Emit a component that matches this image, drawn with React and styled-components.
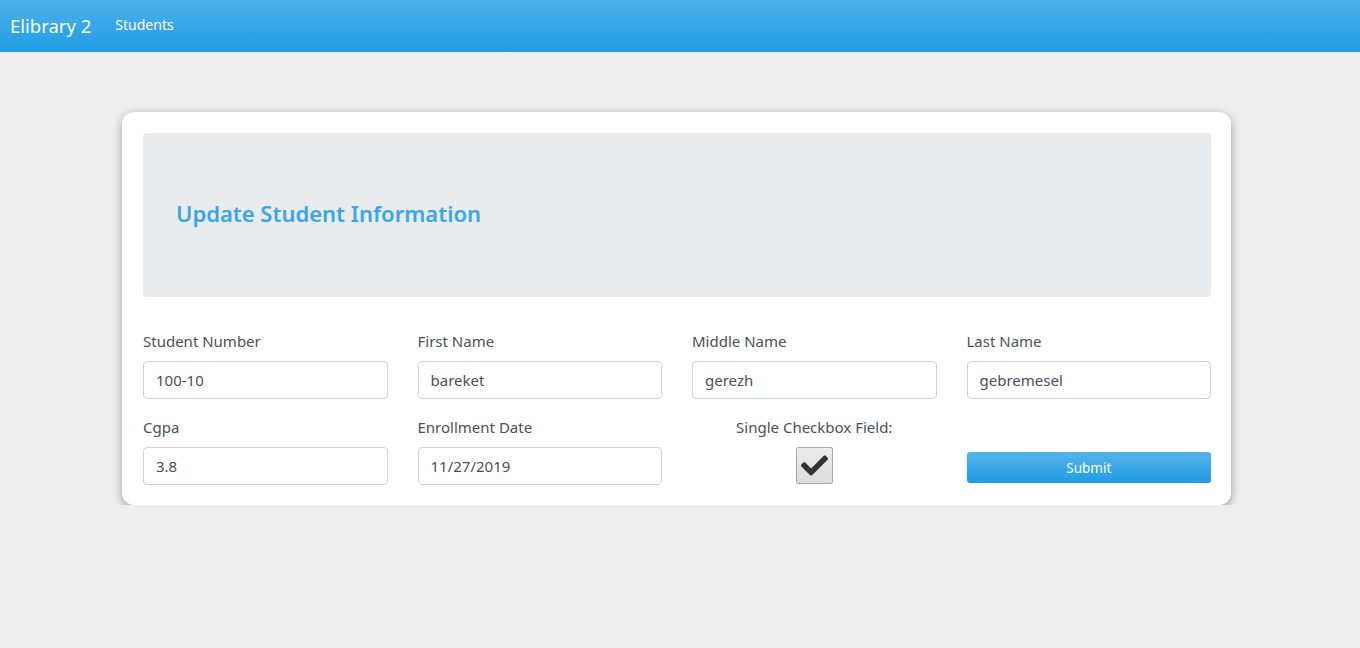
import React from 'react';
import styled, { createGlobalStyle } from 'styled-components';
import { FaCheck } from 'react-icons/fa';

const GlobalStyle = createGlobalStyle`
  body {
    margin: 0;
    background: #eeeeee;
    font-family: "Noto Sans", "Open Sans", sans-serif;
    color: #495057;
  }
  * { box-sizing: border-box; }
`;

const Navbar = styled.nav`
  height: 52px;
  background: linear-gradient(#4cb1ec, #219ce4);
  display: flex;
  align-items: center;
  padding: 0 10px;
  color: #fff;
`;

const Brand = styled.a`
  font-size: 18.5px;
  color: #fff;
  margin-right: 24px;
  margin-top: -2px;
`;

const NavLink = styled.a`
  font-size: 14px;
  color: #fff;
  margin-top: -3px;
`;

const Card = styled.div`
  width: 1109px;
  margin: 60px 0 0 122px;
  background: #fff;
  border-radius: 12px;
  padding: 21px 20px 20px 21px;
  box-shadow: 0 3px 10px rgba(0, 0, 0, 0.35);
`;

const Jumbotron = styled.div`
  height: 164px;
  background: #e9ecef;
  border-radius: 4px;
  display: flex;
  align-items: center;
  padding: 0 33px 5px;
`;

const Title = styled.h1`
  margin: 0;
  font-size: 22px;
  font-weight: 600;
  color: #3aa5e8;
`;

const Grid = styled.div`
  display: grid;
  grid-template-columns: repeat(4, minmax(0, 1fr));
  column-gap: 30px;
  row-gap: 18px;
  margin-top: 34px;
`;

const Field = styled.div`
  display: flex;
  flex-direction: column;
  min-width: 0;
  align-items: ${p => (p.center ? 'center' : 'stretch')};
`;

const Label = styled.label`
  font-size: 15px;
  line-height: 20px;
  margin-bottom: 10px;
  color: #495057;
`;

const Input = styled.input`
  width: 100%;
  min-width: 0;
  height: 38px;
  border: 1px solid #ced4da;
  border-radius: 4px;
  padding: 0 12px;
  font-family: inherit;
  font-size: 15px;
  color: #495057;
  background: #fff;
  outline: none;
`;

const CheckBox = styled.div`
  width: 37px;
  height: 37px;
  border: 1px solid #a8a8a8;
  border-radius: 2px;
  background: linear-gradient(#ececec, #dcdcdc);
  display: flex;
  align-items: center;
  justify-content: center;
  color: #333;
  font-size: 27px;
`;

const ButtonCell = styled.div`
  display: flex;
  align-items: flex-end;
  padding-bottom: 2px;
`;

const SubmitButton = styled.button`
  width: 100%;
  height: 31px;
  border: none;
  border-radius: 3px;
  background: linear-gradient(#54b4eb, #1f9be4);
  color: #fff;
  font-family: inherit;
  font-size: 13.5px;
  cursor: pointer;
`;

const fields = [
  { label: 'Student Number', value: '100-10' },
  { label: 'First Name', value: 'bareket' },
  { label: 'Middle Name', value: 'gerezh' },
  { label: 'Last Name', value: 'gebremesel' },
  { label: 'Cgpa', value: '3.8' },
  { label: 'Enrollment Date', value: '11/27/2019' },
];

export default function App() {
  return (
    <>
      <GlobalStyle />
      <Navbar>
        <Brand>Elibrary 2</Brand>
        <NavLink>Students</NavLink>
      </Navbar>
      <Card>
        <Jumbotron>
          <Title>Update Student Information</Title>
        </Jumbotron>
        <Grid>
          {fields.map(f => (
            <Field key={f.label}>
              <Label>{f.label}</Label>
              <Input defaultValue={f.value} />
            </Field>
          ))}
          <Field center>
            <Label>Single Checkbox Field:</Label>
            <CheckBox>
              <FaCheck />
            </CheckBox>
          </Field>
          <ButtonCell>
            <SubmitButton>Submit</SubmitButton>
          </ButtonCell>
        </Grid>
      </Card>
    </>
  );
}
